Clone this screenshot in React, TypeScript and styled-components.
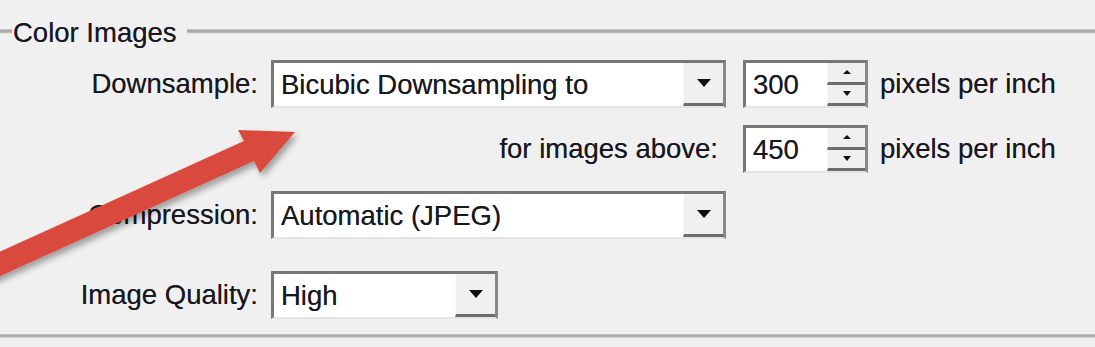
import React from 'react';
import styled, { createGlobalStyle } from 'styled-components';

const GlobalStyle = createGlobalStyle`
  html, body {
    margin: 0;
    padding: 0;
    background: #f0f0f0;
  }
`;

const Frame = styled.div`
  position: relative;
  width: 1095px;
  height: 347px;
  overflow: hidden;
  background: #f0f0f0;
  font-family: "Liberation Sans", Arial, sans-serif;
  font-size: 27.5px;
  color: #18181f;
  text-shadow: 0 0 0.6px rgba(20, 20, 40, 0.7);
  padding-top: 17px;
  box-sizing: border-box;
`;

const Header = styled.div`
  display: flex;
  align-items: center;
  height: 32px;
`;

const Rule = styled.div<{ $width?: number }>`
  height: 5px;
  flex: ${(p) => (p.$width ? `0 0 ${p.$width}px` : '1')};
  margin-bottom: 4px;
  background: linear-gradient(#d2d2d2, #ababab 30%, #a6a6a6 60%, #d0d0d0 80%, #f8f8f8);
`;

const Legend = styled.span`
  line-height: 32px;
  padding: 0 10px 0 1px;
  white-space: nowrap;
`;

const Form = styled.div`
  display: flex;
  flex-direction: column;
`;

const Row = styled.div<{ $mt: number }>`
  display: flex;
  align-items: center;
  margin-top: ${(p) => p.$mt}px;
`;

const Label = styled.div<{ $width: number; $gap: number }>`
  width: ${(p) => p.$width}px;
  margin-right: ${(p) => p.$gap}px;
  text-align: right;
  white-space: nowrap;
`;

const Sunken = styled.div<{ $width: number }>`
  display: flex;
  width: ${(p) => p.$width}px;
  height: 48px;
  box-sizing: border-box;
  background: #fff;
  border-top: 3px solid #777;
  border-left: 3px solid #777;
  border-right: 3px solid #888;
  border-bottom: 2px solid #e4e4e4;
`;

const Value = styled.div`
  flex: 1;
  display: flex;
  align-items: center;
  padding-left: 7px;
  white-space: nowrap;
`;

const DropButton = styled.div`
  width: 40px;
  box-sizing: border-box;
  background: #f0f0f0;
  border-left: 1px solid #fafafa;
  border-bottom: 3px solid #6c6c6c;
  display: flex;
  align-items: center;
  justify-content: center;
`;

const Caret = styled.span<{ $size: number; $up?: boolean }>`
  width: 0;
  height: 0;
  border-left: ${(p) => p.$size}px solid transparent;
  border-right: ${(p) => p.$size}px solid transparent;
  ${(p) =>
    p.$up
      ? `border-bottom: ${p.$size}px solid #111;`
      : `border-top: ${p.$size + 1}px solid #111;`}
`;

const Spinner = styled.div`
  width: 38px;
  display: flex;
  flex-direction: column;
`;

const SpinButton = styled.div`
  flex: 1;
  box-sizing: border-box;
  background: #f0f0f0;
  border-left: 1px solid #fafafa;
  border-bottom: 3px solid #6c6c6c;
  display: flex;
  align-items: center;
  justify-content: center;
`;

const Units = styled.span`
  margin-left: 12px;
  white-space: nowrap;
`;

const Spacer = styled.div<{ $width: number }>`
  width: ${(p) => p.$width}px;
`;

const Bottom = styled.div`
  margin-top: 15px;
  height: 4px;
  background: linear-gradient(#c8c8c8, #a9a9a9 40%, #b4b4b4 70%, #e8e8e8);
`;

const ArrowLayer = styled.svg`
  position: absolute;
  left: 0;
  top: 0;
  width: 1095px;
  height: 347px;
  pointer-events: none;
  overflow: visible;
`;

const Combo = ({ value, width }: { value: string; width: number }) => (
  <Sunken $width={width}>
    <Value>{value}</Value>
    <DropButton>
      <Caret $size={7} />
    </DropButton>
  </Sunken>
);

const Spin = ({ value }: { value: string }) => (
  <Sunken $width={125}>
    <Value>{value}</Value>
    <Spinner>
      <SpinButton>
        <Caret $size={4} $up />
      </SpinButton>
      <SpinButton>
        <Caret $size={4} />
      </SpinButton>
    </Spinner>
  </Sunken>
);

export default function App() {
  return (
    <>
      <GlobalStyle />
      <Frame>
        <Header>
          <Rule $width={12} />
          <Legend>Color Images</Legend>
          <Rule />
        </Header>
        <Form>
          <Row $mt={11}>
            <Label $width={258} $gap={13}>Downsample:</Label>
            <Combo value="Bicubic Downsampling to" width={455} />
            <Spacer $width={17} />
            <Spin value="300" />
            <Units>pixels per inch</Units>
          </Row>
          <Row $mt={17}>
            <Label $width={718} $gap={25}>for images above:</Label>
            <Spin value="450" />
            <Units>pixels per inch</Units>
          </Row>
          <Row $mt={18}>
            <Label $width={258} $gap={13}>Compression:</Label>
            <Combo value="Automatic (JPEG)" width={455} />
          </Row>
          <Row $mt={32}>
            <Label $width={258} $gap={13}>Image Quality:</Label>
            <Combo value="High" width={227} />
          </Row>
        </Form>
        <Bottom />
        <ArrowLayer viewBox="0 0 1095 347">
          <defs>
            <filter id="arrowShadow" x="-20%" y="-20%" width="140%" height="140%">
              <feDropShadow dx="3" dy="4" stdDeviation="3" floodColor="#000" floodOpacity="0.35" />
            </filter>
          </defs>
          <polygon
            points="-25,263 244,141 238,130 295,132 260,173 254,161 -15,283"
            fill="#d9483d"
            filter="url(#arrowShadow)"
          />
        </ArrowLayer>
      </Frame>
    </>
  );
}
